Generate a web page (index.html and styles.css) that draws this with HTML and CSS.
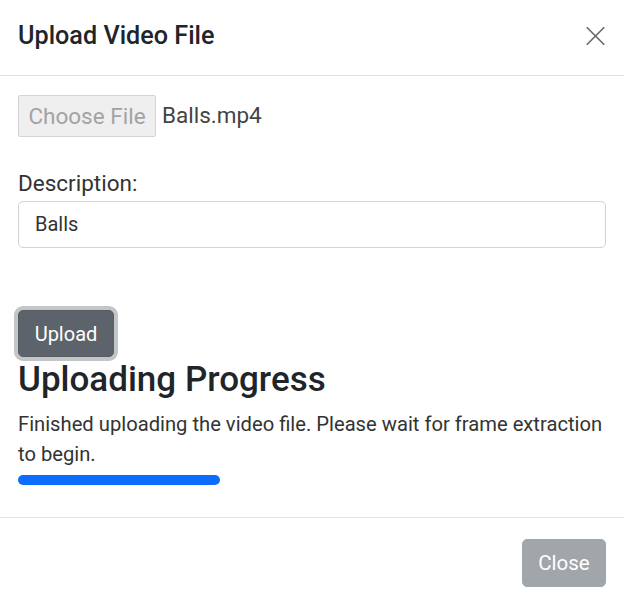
FILE: index.html
```html
<!DOCTYPE html>
<html>
<head>
<meta charset="utf-8">
<link rel="stylesheet" href="styles.css">
</head>
<body>
<div class="modal">
  <div class="modal-header">
    <h5 class="modal-title">Upload Video File</h5>
    <button class="btn-close" aria-label="Close">
      <svg viewBox="0 0 16 16" width="21" height="20"><path d="M1 1L15 15M15 1L1 15" stroke="#6b6b6b" stroke-width="1.4" fill="none"/></svg>
    </button>
  </div>
  <div class="modal-body">
    <div class="file-input">
      <span class="file-btn">Choose File</span>
      <span class="file-name">Balls.mp4</span>
    </div>
    <label class="form-label">Description:</label>
    <div class="form-control">Balls</div>
    <div class="btn-wrap">
      <button class="btn btn-upload">Upload</button>
    </div>
    <h3 class="heading">Uploading Progress</h3>
    <p class="status">Finished uploading the video file. Please wait for frame extraction to begin.</p>
    <div class="progress-bar"></div>
  </div>
  <div class="modal-footer">
    <button class="btn btn-close-footer">Close</button>
  </div>
</div>
</body>
</html>
```

FILE: styles.css
```css
* { box-sizing: border-box; }
html, body {
  margin: 0;
  padding: 0;
  background: #fff;
}
body {
  font-family: Roboto, "Liberation Sans", sans-serif;
  font-size: 20px;
  line-height: 1.5;
  color: #212529;
}
.modal {
  width: 624px;
  display: flex;
  flex-direction: column;
}
.modal-header {
  flex-shrink: 0;
  height: 76px;
  display: flex;
  align-items: center;
  justify-content: space-between;
  padding: 0 18px;
  border-bottom: 1px solid #dee2e6;
}
.modal-title {
  margin: 0;
  margin-top: -3px;
  font-size: 25.2px;
  font-weight: 500;
  line-height: 1.5;
  color: #212529;
}
.btn-close {
  border: 0;
  background: transparent;
  padding: 0;
  width: 21px;
  height: 20px;
  display: flex;
  margin-top: -3px;
}
.modal-body {
  flex-shrink: 0;
  padding: 19px 18px 0 18px;
  height: 442px;
  border-bottom: 1px solid #dee2e6;
}
.file-input {
  display: flex;
  align-items: center;
  gap: 6px;
  height: 42px;
}
.file-btn {
  display: inline-block;
  height: 42px;
  width: 138px;
  line-height: 40px;
  text-align: center;
  background: #efefef;
  border: 1px solid #d4d4d4;
  border-radius: 2px;
  color: #a3a3a3;
  font-size: 22.5px;
}
.file-name {
  color: #444;
  font-size: 22.5px;
}
.form-label {
  display: block;
  margin-top: 31px;
  margin-bottom: 3px;
  line-height: 30px;
  font-size: 22.5px;
  color: #333;
}
.form-control {
  height: 47px;
  border: 1px solid #ced4da;
  border-radius: 5px;
  padding: 7px 16px;
  line-height: 30px;
  color: #333;
}
.btn-wrap {
  margin-top: 58px;
  margin-left: -4px;
  display: flex;
}
.btn {
  font-family: Roboto, "Liberation Sans", sans-serif;
  font-size: 20px;
  line-height: 30px;
  border-radius: 5px;
  color: #fff;
  cursor: pointer;
}
.btn-upload {
  background: #5c636a;
  border: 1px solid #565e64;
  padding: 7px 15px;
  height: 47px;
  width: 96px;
  box-shadow: 0 0 0 4px #c3c5c7;
  margin: 4px;
}
.heading {
  margin: -2px 0 8px 0;
  font-size: 35px;
  font-weight: 500;
  line-height: 42px;
  color: #212529;
}
.status {
  margin: 0;
  line-height: 30px;
  font-size: 20.2px;
  color: #333;
}
.progress-bar {
  margin-top: 6px;
  width: 202px;
  height: 10px;
  border-radius: 5px;
  background: #0d6efd;
}
.modal-footer {
  flex-shrink: 0;
  display: flex;
  justify-content: flex-end;
  padding: 21px 18px 14px 18px;
}
.btn-close-footer {
  background: #a1a6ab;
  border: 1px solid #a1a6ab;
  width: 84px;
  height: 48px;
  padding: 7px 15px;
  font-size: 20.5px;
}
```
